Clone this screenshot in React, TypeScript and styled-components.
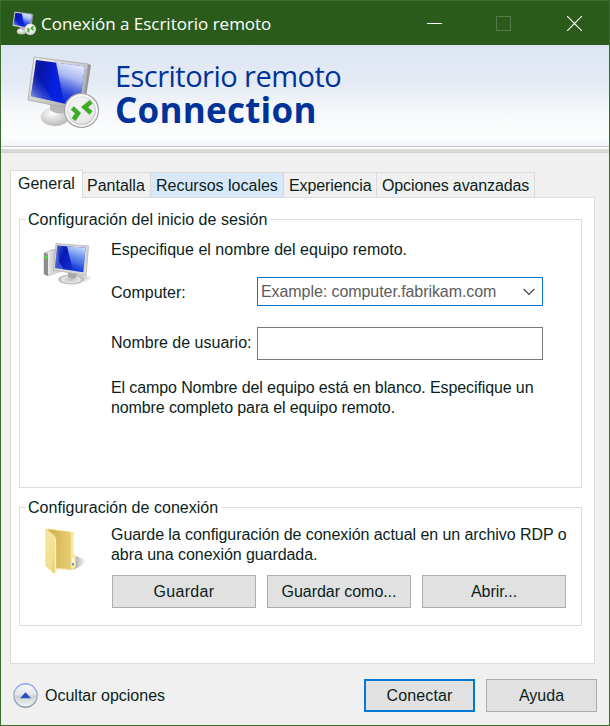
import React from "react";
import styled, { createGlobalStyle, css } from "styled-components";

const GlobalStyle = createGlobalStyle`
  *, *::before, *::after { box-sizing: border-box; }
  body { margin: 0; background: #f0f0f0; }
  svg { display: block; }
`;

const Window = styled.div`
  width: 610px;
  height: 726px;
  display: flex;
  flex-direction: column;
  overflow: hidden;
  border: 1px solid #3a6a2c;
  border-top-color: #416e31;
  background: #f0f0f0;
  color: #0a1e1c;
  font: 16px/20px "Liberation Sans", Arial, sans-serif;
`;

const TitleBar = styled.header`
  height: 44px;
  flex: none;
  display: flex;
  align-items: center;
  padding-left: 11px;
  background: #2b5b1a;
  color: #fff;
`;

const TitleText = styled.h1`
  flex: 1;
  margin: 2px 0 0 4px;
  font: 400 17px/24px "Open Sans", "Noto Sans", sans-serif;
  letter-spacing: -0.02px;
  white-space: nowrap;
`;

const CaptionButton = styled.button`
  width: 70px;
  height: 44px;
  padding: 0;
  border: 0;
  background: none;
  display: grid;
  place-items: center;
  color: #fff;
  &:disabled { color: #557c48; }
`;

const Banner = styled.section`
  height: 108px;
  flex: none;
  display: flex;
  align-items: flex-start;
  padding: 10px 0 0 25px;
  background:
    linear-gradient(#c9c9c9 0 1px, #fdfdfd 1px 3px, #d9d9d9 3px 6px, #d2d2d2 6px 7px) 0 101px / 100% 7px no-repeat,
    linear-gradient(#dce6f2, #e5ebf5 38%, #f5f7fa 65%, #fcfdfd 85%, #fafcfd 93%, #eef4f9 100%) 0 0 / 100% 101px no-repeat;
`;

const BannerTitle = styled.div`
  margin: 3px 0 0 13px;
  color: #003399;
  white-space: nowrap;
  font-family: "Open Sans", "Noto Sans", sans-serif;
`;

const BannerLight = styled.div`
  font-size: 29px;
  line-height: 36px;
  letter-spacing: -0.53px;
`;

const BannerBold = styled.div`
  margin-top: -1px;
  font-size: 35px;
  font-weight: 700;
  line-height: 34px;
  letter-spacing: 0.25px;
`;

const Body = styled.main`
  flex: 1;
  display: flex;
  flex-direction: column;
  padding: 17px 14px 0 9px;
`;

const TabList = styled.div`
  display: flex;
  align-items: flex-end;
  height: 27px;
`;

const Tab = styled.div<{ $width: number; $inset?: number; $active?: boolean; $hot?: boolean }>`
  width: ${(p) => p.$width}px;
  height: 25px;
  padding-left: ${(p) => p.$inset ?? 5}px;
  white-space: nowrap;
  line-height: 25px;
  border: solid #dadada;
  border-width: 1px 1px 0 0;
  background: ${(p) => (p.$hot ? "#d8e8f8" : "#f0f0f0")};
  ${(p) =>
    p.$active &&
    css`
      height: 28px;
      margin-bottom: -1px;
      position: relative;
      border-left-width: 1px;
      background: #fff;
    `}
`;

const Page = styled.section`
  height: 467px;
  padding: 12px 12px 0 8px;
  border: 1px solid #dcdcdc;
  background: #fff;
`;

const Group = styled.fieldset<{ $height: number; $gap?: number }>`
  min-width: 0;
  height: ${(p) => p.$height}px;
  margin: 0 0 ${(p) => p.$gap ?? 0}px;
  padding: 0;
  border: 1px solid #dcdcdc;
`;

const Legend = styled.legend`
  height: 19px;
  margin-left: 6px;
  padding: 0 3px 0 2px;
  line-height: 19px;
  letter-spacing: 0.03px;
`;

const GroupContent = styled.div<{ $top: number }>`
  display: grid;
  grid-template-columns: 91px 1fr;
  padding-top: ${(p) => p.$top}px;
`;

const IconCell = styled.div<{ $top: number; $left: number }>`
  padding: ${(p) => p.$top}px 0 0 ${(p) => p.$left}px;
`;

const Text = styled.p<{ $top?: number; $tracking?: number }>`
  margin: ${(p) => p.$top ?? 0}px 0 0;
  letter-spacing: ${(p) => p.$tracking ?? 0}px;
  white-space: nowrap;
`;

const Field = styled.div<{ $top: number }>`
  display: grid;
  grid-template-columns: 146px 286px;
  align-items: center;
  margin-top: ${(p) => p.$top}px;
`;

const FieldLabel = styled.label<{ $above?: number; $below?: number }>`
  padding: ${(p) => p.$above ?? 0}px 0 ${(p) => p.$below ?? 0}px;
  white-space: nowrap;
`;

const Combo = styled.div`
  height: 29px;
  display: flex;
  align-items: center;
  justify-content: space-between;
  padding: 0 7px 0 3px;
  border: 1px solid #0a74c9;
  background: #fff;
  color: #5c5c5c;
  letter-spacing: -0.07px;
`;

const TextInput = styled.input`
  width: 286px;
  height: 33px;
  border: 1px solid #7a7a7a;
  background: #fff;
  outline: 0;
`;

const ButtonRow = styled.div`
  display: flex;
  gap: 11px;
  margin: 10px 0 0 1px;
`;

const Button = styled.button<{ $width: number; $primary?: boolean; $tracking?: number }>`
  width: ${(p) => p.$width}px;
  height: 33px;
  padding: 0;
  border: ${(p) => (p.$primary ? "2px solid #0078d7" : "1px solid #adadad")};
  background: #e1e1e1;
  color: inherit;
  font: inherit;
  letter-spacing: ${(p) => p.$tracking ?? 0}px;
`;

const Footer = styled.footer`
  display: flex;
  align-items: center;
  gap: 11px;
  padding: 15px 0 0 3px;
  margin-right: -2px;
`;

const Toggle = styled.div`
  flex: 1;
  display: flex;
  align-items: center;
  gap: 6px;
`;

function RemoteIcon({ size, id }: { size: number; id: string }) {
  return (
    <svg width={size} height={size} viewBox="0 0 76 76">
      <defs>
        <linearGradient id={id + "s"} x1="0" y1="0.1" x2="1" y2="0.3">
          <stop offset="0" stopColor="#1424a0" />
          <stop offset=".2" stopColor="#0614a6" />
          <stop offset=".48" stopColor="#0620e0" />
          <stop offset="1" stopColor="#0a2ad8" />
        </linearGradient>
        <linearGradient id={id + "g"} x1="0.6" y1="0" x2="0.35" y2="1">
          <stop offset="0" stopColor="#e8eeff" />
          <stop offset=".35" stopColor="#a4b4f2" />
          <stop offset=".75" stopColor="#3850d8" stopOpacity=".6" />
          <stop offset="1" stopColor="#1834d8" stopOpacity=".1" />
        </linearGradient>
        <linearGradient id={id + "l"} x1="0" y1="1" x2="0.5" y2="0.3">
          <stop offset="0" stopColor="#b4c5fa" stopOpacity=".9" />
          <stop offset="1" stopColor="#1734c8" stopOpacity="0" />
        </linearGradient>
        <linearGradient id={id + "f"} x1="0" y1="0" x2="1" y2="1">
          <stop offset="0" stopColor="#eeeeea" />
          <stop offset=".5" stopColor="#cdcdcb" />
          <stop offset="1" stopColor="#9c9c9c" />
        </linearGradient>
        <radialGradient id={id + "b"} cx=".4" cy=".3" r=".75">
          <stop offset="0" stopColor="#fff" />
          <stop offset="1" stopColor="#b4b4b4" />
        </radialGradient>
      </defs>
      <ellipse cx="29" cy="62" rx="14" ry="9" fill={"url(#" + id + "b)"} stroke="#cbcbcb" strokeWidth=".6" />
      <path d="M24 48 L43 52 L40 58 Q31 60 24 55Z" fill="#b8b8b8" />
      <path d="M62 9 L65 10 L58 55 L54 56Z" fill="#969696" />
      <path d="M8 2 L62 9 L56 56 L2 45Z" fill={"url(#" + id + "f)"} stroke="#a8a8a6" strokeWidth=".8" />
      <path d="M10 5 L59 11.5 L53 52 L5 41Z" fill={"url(#" + id + "s)"} />
      <path d="M9 12 L18 30 Q23 41 28 46 L5 41Z" fill={"url(#" + id + "l)"} />
      <path d="M30 7.6 L59 11.5 L53 52 L38 48Z" fill={"url(#" + id + "g)"} />
      <circle cx="55.5" cy="55.5" r="17" fill="#eee" stroke="#a4a4a4" strokeWidth="1.2" />
      <circle cx="55.5" cy="55.5" r="15" fill={"url(#" + id + "b)"} stroke="#fafafa" strokeWidth="1.3" />
      <circle cx="55.5" cy="55.5" r="13.5" fill="#f2f2f2" opacity=".75" />
      <g fill="none" stroke="#3dab25" strokeWidth="4.6">
        <path d="M46.3 52.8 L52 58.2 L47.6 64.6" />
        <path d="M65.2 46.8 L58.6 52.2 L65 58" />
      </g>
    </svg>
  );
}

function ComputerIcon() {
  return (
    <svg width="50" height="46" viewBox="0 0 50 46">
      <defs>
        <linearGradient id="cs" x1="0" y1="0" x2="1" y2=".4">
          <stop offset="0" stopColor="#4e68d4" />
          <stop offset=".35" stopColor="#0719b4" />
          <stop offset="1" stopColor="#123ade" />
        </linearGradient>
        <linearGradient id="cg" x1=".6" y1="0" x2=".4" y2="1">
          <stop offset="0" stopColor="#c3dfff" />
          <stop offset=".65" stopColor="#5480ee" stopOpacity=".7" />
          <stop offset="1" stopColor="#1533d1" stopOpacity=".1" />
        </linearGradient>
        <linearGradient id="ct">
          <stop offset="0" stopColor="#9b9b9b" />
          <stop offset=".35" stopColor="#e9e9e9" />
          <stop offset="1" stopColor="#b9b9b9" />
        </linearGradient>
        <radialGradient id="cb">
          <stop offset="0" stopColor="#bdbdbd" />
          <stop offset=".7" stopColor="#e8e8e8" />
          <stop offset="1" stopColor="#aaa" />
        </radialGradient>
        <radialGradient id="csh">
          <stop offset="0" stopColor="#888" stopOpacity=".6" />
          <stop offset="1" stopColor="#888" stopOpacity="0" />
        </radialGradient>
      </defs>
      <ellipse cx="37" cy="35" rx="12" ry="5" fill="url(#csh)" />
      <path d="M1 10 L11 6 L14 8 L14 29 L5 33 L1 31Z" fill="url(#ct)" stroke="#aaa" strokeWidth=".6" />
      <path d="M1 10 L5 11 L5 33 L1 31Z" fill="#8c8c8c" />
      <rect x="1.8" y="12.5" width="2.6" height="3.6" fill="#49df38" />
      <path d="M5 31 L15 27 L18 29 L7 33Z" fill="#d5d5d5" />
      <ellipse cx="28" cy="36.5" rx="12.5" ry="4.6" fill="url(#cb)" stroke="#b5b5b5" strokeWidth=".6" />
      <path d="M25 28 L34 30 L33 35 Q29 37 25 34Z" fill="#aaa" />
      <path d="M13 0.6 L45.5 3 L43 32.5 L10.5 27Z" fill="#d9d9d6" stroke="#b2b2ae" strokeWidth=".8" />
      <path d="M14.2 2.4 L42.5 4.8 L40.3 29.3 L12 25Z" fill="url(#cs)" />
      <path d="M24 3.3 L42.5 4.8 L40.3 29.3 L30 27.7Z" fill="url(#cg)" />
      <path d="M14.2 2.4 L16 19 L21 26.4 L12 25Z" fill="#86a7ff" opacity=".4" />
    </svg>
  );
}

function FolderIcon() {
  return (
    <svg width="46" height="50" viewBox="0 0 46 50">
      <defs>
        <linearGradient id="ff" x1="0" y1="0" x2="1" y2="1">
          <stop offset="0" stopColor="#f7e8a6" />
          <stop offset=".65" stopColor="#f3df8e" />
          <stop offset="1" stopColor="#e3c360" />
        </linearGradient>
        <linearGradient id="fb">
          <stop offset="0" stopColor="#cfae50" />
          <stop offset=".75" stopColor="#e6cb70" />
          <stop offset="1" stopColor="#f3de8b" />
        </linearGradient>
        <linearGradient id="fs" gradientUnits="userSpaceOnUse" x1="30" y1="0" x2="42" y2="0">
          <stop offset="0" stopColor="#777" stopOpacity=".65" />
          <stop offset="1" stopColor="#aaa" stopOpacity="0" />
        </linearGradient>
      </defs>
      <path d="M28 27 L42 32 Q38 38 28 41.5Z" fill="url(#fs)" />
      <path d="M3 1 L28 4.5 L28 26 L30.5 28 L30.5 39 L27 41.5 L10 40Z" fill="url(#fb)" stroke="#edd477" strokeWidth=".8" />
      <path d="M26 4.3 L28 4.5 L28 26 L30.5 28 L30.5 39 L27 41.5 L26 40Z" fill="#f8e8a0" />
      <rect x="27" y="30.5" width="2" height="5" fill="#fff" />
      <rect x="27" y="35" width="2" height="2.4" fill="#5796d4" />
      <path d="M1 .8 L9.5 7.5 Q11 9 11 12 L11 43 L9.5 45.5 L1 38Z" fill="url(#ff)" stroke="#edd27a" strokeWidth=".8" />
      <path d="M9.8 8.5 L11 12 L11 43 L9.6 45Z" fill="#fff2b4" />
    </svg>
  );
}

function CollapseIcon() {
  return (
    <svg width="26" height="26" viewBox="0 0 26 26">
      <defs>
        <linearGradient id="ob" x1="0" y1="0" x2="0" y2="1">
          <stop offset="0" stopColor="#f9fbfd" />
          <stop offset=".48" stopColor="#e0e4e7" />
          <stop offset=".52" stopColor="#c8cfd3" />
          <stop offset="1" stopColor="#f3f8f6" />
        </linearGradient>
        <linearGradient id="or" x1="0" y1="0" x2="0" y2="1">
          <stop offset="0" stopColor="#8fa3ed" />
          <stop offset=".5" stopColor="#a6b2cd" />
          <stop offset="1" stopColor="#8798a6" />
        </linearGradient>
      </defs>
      <circle cx="12.5" cy="12.5" r="11.7" fill="url(#ob)" stroke="url(#or)" strokeWidth="1.4" />
      <path d="M7 15.2 L12.5 9.3 L18 15.2Z" fill="#2c4dc0" />
    </svg>
  );
}

export default function App() {
  return (
    <>
      <GlobalStyle />
      <Window>
        <TitleBar>
          <RemoteIcon size={25} id="t" />
          <TitleText>Conexión a Escritorio remoto</TitleText>
          <CaptionButton aria-label="Minimizar">
            <svg width="15" height="15"><path d="M0 7.5H15" stroke="currentColor" /></svg>
          </CaptionButton>
          <CaptionButton aria-label="Maximizar" disabled>
            <svg width="17" height="15"><rect x=".5" y=".5" width="14" height="14" fill="none" stroke="currentColor" /></svg>
          </CaptionButton>
          <CaptionButton aria-label="Cerrar">
            <svg width="15" height="15"><path d="M0 0L15 15M15 0L0 15" stroke="currentColor" strokeWidth="1.2" /></svg>
          </CaptionButton>
        </TitleBar>
        <Banner>
          <RemoteIcon size={76} id="b" />
          <BannerTitle>
            <BannerLight>Escritorio remoto</BannerLight>
            <BannerBold>Connection</BannerBold>
          </BannerTitle>
        </Banner>
        <Body>
          <TabList>
            <Tab $width={73} $inset={7} $active>General</Tab>
            <Tab $width={68} $inset={4}>Pantalla</Tab>
            <Tab $width={133} $hot>Recursos locales</Tab>
            <Tab $width={93}><Text $tracking={-0.1}>Experiencia</Text></Tab>
            <Tab $width={158}><Text $tracking={-0.13}>Opciones avanzadas</Text></Tab>
          </TabList>
          <Page>
            <Group $height={278} $gap={10}>
              <Legend>Configuración del inicio de sesión</Legend>
              <GroupContent $top={11}>
                <IconCell $top={3} $left={23}><ComputerIcon /></IconCell>
                <div>
                  <Text $tracking={0.02}>Especifique el nombre del equipo remoto.</Text>
                  <Field $top={17}>
                    <FieldLabel $above={2}>Computer:</FieldLabel>
                    <Combo>
                      <span>Example: computer.fabrikam.com</span>
                      <svg width="12" height="8"><path d="M.7 1L6 6.3L11.3 1" fill="none" stroke="#444" strokeWidth="1.2" /></svg>
                    </Combo>
                  </Field>
                  <Field $top={21}>
                    <FieldLabel htmlFor="user" $below={2}>Nombre de usuario:</FieldLabel>
                    <TextInput id="user" />
                  </Field>
                  <Text $top={18} $tracking={-0.11}>
                    El campo Nombre del equipo está en blanco. Especifique un
                    <br />
                    nombre completo para el equipo remoto.
                  </Text>
                </div>
              </GroupContent>
            </Group>
            <Group $height={128}>
              <Legend>Configuración de conexión</Legend>
              <GroupContent $top={8}>
                <IconCell $top={3} $left={25}><FolderIcon /></IconCell>
                <div>
                  <Text $tracking={-0.065}>
                    Guarde la configuración de conexión actual en un archivo RDP o
                    <br />
                    abra una conexión guardada.
                  </Text>
                  <ButtonRow>
                    <Button $width={144} $tracking={0.3}>Guardar</Button>
                    <Button $width={144} $tracking={-0.05}>Guardar como...</Button>
                    <Button $width={144}>Abrir...</Button>
                  </ButtonRow>
                </div>
              </GroupContent>
            </Group>
          </Page>
          <Footer>
            <Toggle><CollapseIcon />Ocultar opciones</Toggle>
            <Button $width={111} $primary $tracking={0.12}>Conectar</Button>
            <Button $width={111}>Ayuda</Button>
          </Footer>
        </Body>
      </Window>
    </>
  );
}
